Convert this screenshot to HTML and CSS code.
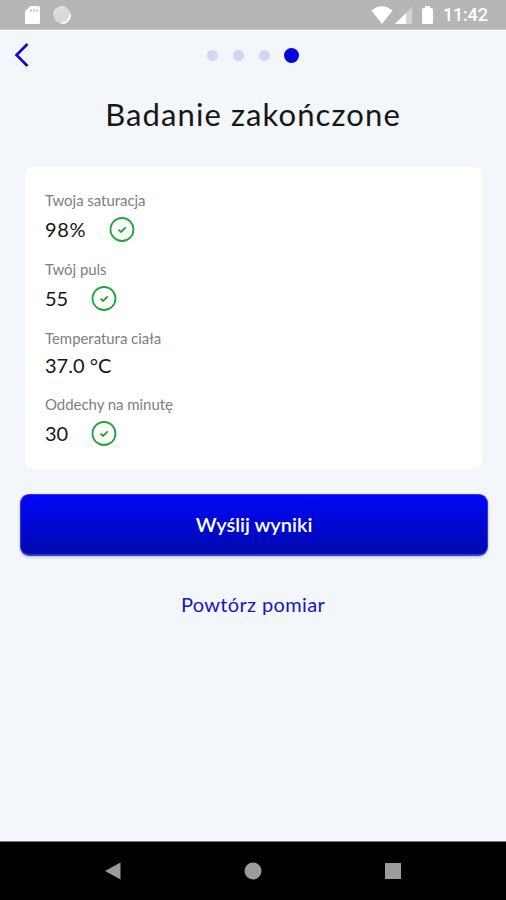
FILE: index.html
```html
<!DOCTYPE html>
<html lang="pl">
<head>
    <meta charset="UTF-8">
    <meta name="viewport" content="width=device-width, initial-scale=1.0">
    <title>Badanie zakończone</title>
    <link rel="stylesheet" href="styles.css">
</head>
<body>
    <div class="screen">
        <div class="status-bar">
            <svg class="status-left" width="50" height="24" viewBox="0 0 50 24">
                <path d="M6.500 3h8q1.500 0 1.500 1.500v15q0 1.500-1.500 1.500h-12q-1.500 0-1.500-1.500v-11z" fill="#fff"/>
                <path d="M7 6v3M10 6v3M13 6v3" stroke="#c4c5c6" stroke-width="1.500"/>
                <circle cx="38" cy="12" r="8.500" fill="#d9dadb"/>
                <path d="M46 11a8 8 0 0 1-9 9" fill="none" stroke="#fafafa" stroke-width="2"/>
                <path d="M30 12a8 8 0 0 1 11-7.500" fill="none" stroke="#e6e6e6" stroke-width="1.500"/>
            </svg>
            <svg class="status-right" width="66" height="24" viewBox="0 0 66 24">
                <path d="M0.500 7.500Q11 -1 21.500 7.500L11 21z" fill="#fff"/>
                <path d="M41 4v17H24z" fill="#d3d4d5"/>
                <path d="M35 10v11H24z" fill="#fff"/>
                <path d="M54 3h5v2h1.500q1.500 0 1.500 1.500v13q0 1.500-1.500 1.500h-8q-1.500 0-1.500-1.500v-13q0-1.500 1.500-1.500H54z" fill="#fff"/>
            </svg>
            <span class="clock">11:42</span>
        </div>

        <div class="top-bar">
            <svg class="back" width="16" height="26" viewBox="0 0 16 26">
                <path d="M13.500 2L2.500 13L13.500 24" fill="none" stroke="#0b0bc4" stroke-width="2.600"/>
            </svg>
            <div class="steps">
                <span class="step"></span>
                <span class="step"></span>
                <span class="step"></span>
                <span class="step active"></span>
            </div>
        </div>

        <h1>Badanie zakończone</h1>

        <div class="card">
            <div class="result">
                <div class="label">Twoja saturacja</div>
                <div class="value">
                    <span class="percent">98%</span>
                    <svg class="check" width="26" height="26" viewBox="0 0 26 26">
                        <circle cx="13" cy="13.500" r="11.500"/>
                        <path d="M9.500 13.700l2.500 2.300l4.700-4.700"/>
                    </svg>
                </div>
            </div>
            <div class="result">
                <div class="label">Twój puls</div>
                <div class="value">
                    <span>55</span>
                    <svg class="check" width="26" height="26" viewBox="0 0 26 26">
                        <circle cx="13" cy="13.500" r="11.500"/>
                        <path d="M9.500 13.700l2.500 2.300l4.700-4.700"/>
                    </svg>
                </div>
            </div>
            <div class="result">
                <div class="label">Temperatura ciała</div>
                <div class="value">
                    <span>37.0 °C</span>
                </div>
            </div>
            <div class="result">
                <div class="label">Oddechy na minutę</div>
                <div class="value">
                    <span>30</span>
                    <svg class="check" width="26" height="26" viewBox="0 0 26 26">
                        <circle cx="13" cy="13.500" r="11.500"/>
                        <path d="M9.500 13.700l2.500 2.300l4.700-4.700"/>
                    </svg>
                </div>
            </div>
        </div>

        <button class="send">Wyślij wyniki</button>
        <a class="repeat">Powtórz pomiar</a>

        <div class="nav-bar">
            <svg width="18" height="18" viewBox="0 0 18 18"><path d="M1 9L16.500 0.500V17.500z"/></svg>
            <svg width="18" height="18" viewBox="0 0 18 18"><circle cx="9" cy="9" r="8.500"/></svg>
            <svg width="18" height="18" viewBox="0 0 18 18"><path d="M1 1h16v16H1z"/></svg>
        </div>
    </div>
</body>
</html>
```

FILE: styles.css
```css
body {
    margin: 0;
    font-family: Lato, "Noto Sans", sans-serif;
    background-color: #f3f6fa;
    color: #161616;
}
.screen {
    display: flex;
    flex-direction: column;
    height: 900px;
}
.status-bar {
    display: flex;
    align-items: center;
    box-sizing: border-box;
    height: 30px;
    padding: 1px 18px 0 24px;
    background-color: #b5b6b7;
    border-bottom: 1px solid #c9cacb;
}
.status-right {
    margin-left: auto;
}
.clock {
    width: 45px;
    margin-left: 6px;
    font: 500 18px/24px Roboto, sans-serif;
    letter-spacing: -0.2px;
    color: #fff;
    white-space: nowrap;
}
.top-bar {
    display: grid;
    grid-template-columns: 40px 1fr 40px;
    align-items: center;
    height: 50px;
    padding-bottom: 1px;
    border-top: 1px solid #fff;
    box-sizing: border-box;
}
.back {
    margin-left: 14px;
}
.steps {
    display: flex;
    justify-content: center;
    align-items: center;
    gap: 15px;
}
.step {
    width: 11px;
    height: 11px;
    border-radius: 50%;
    background-color: #d5d4f1;
}
.step.active {
    width: 15px;
    height: 15px;
    margin-left: -1px;
    background-color: #0505d8;
}
h1 {
    margin: 14px 0 0;
    font-size: 31px;
    font-weight: 400;
    line-height: 40px;
    letter-spacing: 1.1px;
    text-align: center;
}
.card {
    box-sizing: border-box;
    height: 302px;
    margin: 33px 24px 0 25px;
    padding: 23px 20px;
    background-color: #fff;
    border-radius: 8px;
}
.result {
    margin-bottom: 17px;
}
.label {
    font-size: 15px;
    line-height: 20px;
    letter-spacing: -0.05px;
    color: #808080;
}
.value {
    display: flex;
    align-items: center;
    gap: 23px;
    min-height: 23px;
    margin-top: 6px;
    font-size: 20px;
    line-height: 23px;
}
.percent {
    letter-spacing: 0.7px;
}
.check {
    overflow: visible;
    fill: none;
    stroke: #20a336;
    stroke-width: 1.8;
}
.send {
    flex-shrink: 0;
    height: 62px;
    margin: 25px 18px 0 20px;
    padding: 0 0 2px;
    border: 1px solid #3437d8;
    border-bottom: 2px solid #2b3be0;
    border-radius: 9px;
    background: linear-gradient(#0008fa, #0009ae);
    box-shadow: 0 1px 3px rgba(0, 0, 60, 0.25);
    font-family: inherit;
    font-size: 20px;
    font-weight: 600;
    color: #fff;
}
.repeat {
    margin-top: 35px;
    font-size: 20px;
    line-height: 26px;
    letter-spacing: 0.35px;
    text-align: center;
    color: #1717c0;
}
.nav-bar {
    display: flex;
    justify-content: center;
    align-items: center;
    gap: 122px;
    box-sizing: border-box;
    height: 59px;
    margin-top: auto;
    background-color: #000;
    border-top: 1px solid #777;
    fill: #9b9b9b;
}
```
